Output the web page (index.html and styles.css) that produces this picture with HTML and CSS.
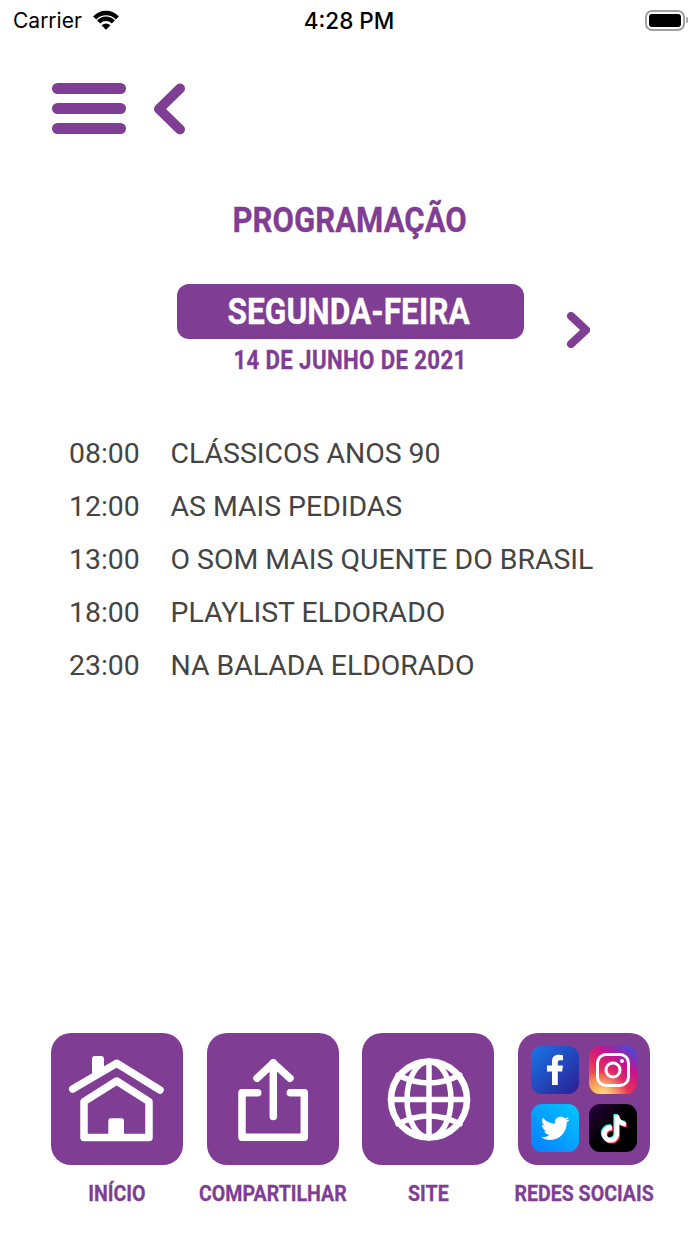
FILE: index.html
```html
<!DOCTYPE html>
<html lang="en">

<head>
    <meta charset="UTF-8">
    <title>Programação</title>
    <link rel="stylesheet" href="styles.css">
</head>

<body>
    <div class="page">
        <div class="status-bar">
            <div class="status-left">
                <span class="carrier">Carrier</span>
                <svg class="wifi" width="28" height="20" viewBox="0 0 28 20">
                    <path d="M2.700 7.900 A15.500 15.500 0 0 1 25.300 7.900"/>
                    <path d="M6.700 11.900 A10 10 0 0 1 21.300 11.900"/>
                    <path class="wifi-dot" d="M14 19.800 L9.500 15.200 Q14 11.600 18.500 15.200 Z"/>
                </svg>
            </div>
            <span class="clock">4:28 PM</span>
            <div class="battery">
                <div class="battery-body"><div class="battery-fill"></div></div>
                <div class="battery-nub"></div>
            </div>
        </div>

        <div class="toolbar">
            <div class="burger">
                <span></span>
                <span></span>
                <span></span>
            </div>
            <svg width="32" height="52" viewBox="0 0 32 52">
                <path class="chevron" d="M27 5.500 L6 26 L27 46.500"/>
            </svg>
        </div>

        <h1 class="title"><span class="narrow">PROGRAMAÇÃO</span></h1>

        <div class="day-row">
            <div class="day-pill"><span class="narrow">SEGUNDA-FEIRA</span></div>
            <svg class="next" width="24" height="36" viewBox="0 0 24 36">
                <path class="chevron" d="M5 4 L20 18 L5 32"/>
            </svg>
        </div>
        <div class="date"><span class="narrow">14 DE JUNHO DE 2021</span></div>

        <div class="schedule">
            <div class="show"><span>08:00</span><span>CLÁSSICOS ANOS 90</span></div>
            <div class="show"><span>12:00</span><span>AS MAIS PEDIDAS</span></div>
            <div class="show"><span>13:00</span><span>O SOM MAIS QUENTE DO BRASIL</span></div>
            <div class="show"><span>18:00</span><span>PLAYLIST ELDORADO</span></div>
            <div class="show"><span>23:00</span><span>NA BALADA ELDORADO</span></div>
        </div>

        <div class="footer">
            <div class="item">
                <div class="tile">
                    <svg class="line-icon" viewBox="0 0 132 132">
                        <path class="solid" d="M41 42 V26 Q41 23 44 23 H50 Q53 23 53 26 V36 Z"/>
                        <path d="M21.700 56 L65.700 30.300 L109 57"/>
                        <path d="M33 68.700 L65.700 48 L98 68.700 V104.500 H33 Z"/>
                        <path class="solid door" d="M57.300 104 V88 Q57.300 85.300 60 85.300 H70.300 Q73 85.300 73 88 V104 Z"/>
                    </svg>
                </div>
                <span class="label"><span class="narrow">INÍCIO</span></span>
            </div>
            <div class="item">
                <div class="tile">
                    <svg class="line-icon" viewBox="0 0 132 132">
                        <path d="M50 45.300 L66.300 30 L83 45.300"/>
                        <path d="M66.300 30 V83.500"/>
                        <path d="M50.700 59.700 H35 V104.300 H97.300 V59.700 H83.300"/>
                    </svg>
                </div>
                <span class="label"><span class="narrow">COMPARTILHAR</span></span>
            </div>
            <div class="item">
                <div class="tile">
                    <svg class="line-icon globe" viewBox="0 0 132 132">
                        <circle class="globe-rim" cx="67" cy="66.500" r="38"/>
                        <ellipse cx="67" cy="66.500" rx="22" ry="38"/>
                        <path d="M67 28 V105"/>
                        <path d="M28.500 66.500 H105.500"/>
                        <path d="M36 42 Q67 58 98 42"/>
                        <path d="M36 91 Q67 75 98 91"/>
                    </svg>
                </div>
                <span class="label"><span class="narrow">SITE</span></span>
            </div>
            <div class="item">
                <div class="tile social">
                    <svg class="social-icon" viewBox="0 0 48 48">
                        <defs>
                            <linearGradient id="fb" x1="0" y1="0" x2="1" y2="1">
                                <stop offset="0" stop-color="#1877e6"/>
                                <stop offset="1" stop-color="#2b1c94"/>
                            </linearGradient>
                        </defs>
                        <rect width="48" height="48" rx="11" fill="url(#fb)"/>
                        <path fill="#fff" d="M21 39 V25.500 H16 V19.500 H21 V15.500 C21 11 23.500 8.800 27.500 8.800 C29.500 8.800 31 9 32 9.200 V14.300 H29 C27 14.300 26.800 15.300 26.800 16.800 V19.500 H32 L31.200 25.500 H26.800 V39 Z"/>
                    </svg>
                    <svg class="social-icon" viewBox="0 0 48 48">
                        <defs>
                            <linearGradient id="ig" x1="0.1" y1="1" x2="0.8" y2="0">
                                <stop offset="0" stop-color="#f8902c"/>
                                <stop offset="0.4" stop-color="#e8305a"/>
                                <stop offset="0.7" stop-color="#c5148c"/>
                                <stop offset="1" stop-color="#4f45d8"/>
                            </linearGradient>
                            <radialGradient id="ig-glow" cx="0.3" cy="1" r="0.5">
                                <stop offset="0" stop-color="#ffdc80"/>
                                <stop offset="1" stop-color="#ffdc80" stop-opacity="0"/>
                            </radialGradient>
                        </defs>
                        <rect width="48" height="48" rx="11" fill="url(#ig)"/>
                        <rect width="48" height="48" rx="11" fill="url(#ig-glow)"/>
                        <rect x="8.500" y="8.500" width="31" height="31" rx="8.500" fill="none" stroke="#fff" stroke-width="3"/>
                        <circle cx="24" cy="24" r="7" fill="none" stroke="#fff" stroke-width="3"/>
                        <circle cx="33" cy="15" r="2" fill="#fff"/>
                    </svg>
                    <svg class="social-icon" viewBox="0 0 48 48">
                        <defs>
                            <linearGradient id="tw" x1="0" y1="1" x2="1" y2="0">
                                <stop offset="0" stop-color="#0a7bff"/>
                                <stop offset="1" stop-color="#00c8ff"/>
                            </linearGradient>
                        </defs>
                        <rect width="48" height="48" rx="11" fill="url(#tw)"/>
                        <path fill="#fff" transform="translate(10 10) scale(1.190)" d="M23.953 4.570a10 10 0 01-2.825.775 4.958 4.958 0 002.163-2.723c-.951.555-2.005.959-3.127 1.184a4.920 4.920 0 00-8.384 4.482C7.690 8.095 4.067 6.130 1.640 3.162a4.822 4.822 0 00-.666 2.475c0 1.710.870 3.213 2.188 4.096a4.904 4.904 0 01-2.228-.616v.060a4.923 4.923 0 003.946 4.827 4.996 4.996 0 01-2.212.085 4.936 4.936 0 004.604 3.417 9.867 9.867 0 01-6.102 2.105c-.390 0-.779-.023-1.170-.067a13.995 13.995 0 007.557 2.209c9.053 0 13.998-7.496 13.998-13.985 0-.210 0-.420-.015-.630A9.935 9.935 0 0024 4.590z"/>
                    </svg>
                    <svg class="social-icon" viewBox="0 0 48 48">
                        <defs>
                            <linearGradient id="tk" x1="0" y1="0" x2="1" y2="1">
                                <stop offset="0" stop-color="#2a0040"/>
                                <stop offset="0.5" stop-color="#000"/>
                            </linearGradient>
                            <path id="note" d="M12.525.020c1.310-.020 2.610-.010 3.910-.020.080 1.530.630 3.090 1.750 4.170 1.120 1.110 2.700 1.620 4.240 1.790v4.030c-1.440-.050-2.890-.350-4.200-.970-.570-.260-1.100-.590-1.620-.930-.010 2.920.010 5.840-.020 8.750-.080 1.400-.540 2.790-1.350 3.940-1.310 1.920-3.580 3.170-5.910 3.210-1.430.080-2.860-.310-4.080-1.030-2.020-1.190-3.440-3.370-3.650-5.710-.020-.500-.030-1-.010-1.490.180-1.900 1.120-3.720 2.580-4.960 1.660-1.440 3.980-2.130 6.150-1.720.020 1.480-.040 2.960-.040 4.440-.990-.320-2.150-.230-3.020.370-.630.410-1.110 1.040-1.360 1.750-.210.510-.150 1.070-.140 1.610.240 1.640 1.820 3.020 3.500 2.870 1.120-.010 2.190-.660 2.770-1.610.190-.330.400-.670.410-1.060.100-1.790.060-3.570.070-5.360.010-4.030-.010-8.050.020-12.070z"/>
                        </defs>
                        <rect width="48" height="48" rx="11" fill="url(#tk)"/>
                        <use href="#note" fill="#25f4ee" transform="translate(10 10) scale(1.150)"/>
                        <use href="#note" fill="#fe2c55" transform="translate(12 12) scale(1.150)"/>
                        <use href="#note" fill="#fff" transform="translate(11 11) scale(1.150)"/>
                    </svg>
                </div>
                <span class="label"><span class="narrow">REDES SOCIAIS</span></span>
            </div>
        </div>
    </div>
</body>

</html>
```

FILE: styles.css
```css
body {
    margin: 0;
    background-color: #fff;
    font-family: Roboto, Arial, sans-serif;
}

.page {
    display: flex;
    flex-direction: column;
    width: 700px;
    height: 1244px;
    overflow: hidden;
}

.narrow {
    display: inline-block;
    transform: scaleX(0.89);
    white-space: nowrap;
    -webkit-text-stroke: 0.3px currentColor;
}

.status-bar {
    display: grid;
    grid-template-columns: 1fr auto 1fr;
    align-items: center;
    height: 40px;
    padding: 0 12px 0 13px;
    color: #000;
    font-family: Inter, Roboto, sans-serif;
    font-size: 21px;
}

.status-left {
    display: flex;
    align-items: center;
    gap: 10px;
}

.wifi path {
    fill: none;
    stroke: #000;
    stroke-width: 4.4;
}

.wifi .wifi-dot {
    fill: #000;
    stroke: none;
}

.clock {
    margin-right: 3px;
    font-size: 22.5px;
    font-weight: 500;
}

.battery {
    display: flex;
    align-items: center;
    justify-self: end;
    gap: 1px;
}

.battery-body {
    width: 40px;
    height: 21px;
    padding: 2px;
    box-sizing: border-box;
    border: 2px solid #a0a0a0;
    border-radius: 7px;
}

.battery-fill {
    height: 100%;
    background: #000;
    border-radius: 3px;
}

.battery-nub {
    width: 2px;
    height: 6px;
    background: #a8a8a8;
    border-radius: 1px;
}

.toolbar {
    display: flex;
    align-items: flex-start;
    gap: 27px;
    margin: 43px 0 0 52px;
}

.burger {
    display: flex;
    flex-direction: column;
    gap: 9px;
    width: 74px;
}

.burger span {
    height: 11px;
    background: #7f3e93;
    border-radius: 6px;
}

.chevron {
    fill: none;
    stroke: #7f3e93;
    stroke-width: 10;
    stroke-linecap: round;
    stroke-linejoin: round;
}

.next .chevron {
    stroke-width: 8;
}

.title {
    margin: 65px 0 0;
    color: #7f3e93;
    font-size: 35px;
    font-weight: 700;
    line-height: 42px;
    text-align: center;
}

.day-row {
    display: flex;
    gap: 42px;
    margin: 42px 0 0 177px;
}

.day-pill {
    width: 347px;
    height: 55px;
    padding-right: 3px;
    box-sizing: border-box;
    background: #7f3e93;
    border-radius: 12px;
    color: #fff;
    font-size: 36px;
    font-weight: 700;
    line-height: 57px;
    text-align: center;
}

.day-pill .narrow {
    transform: scaleX(0.88);
}

.next {
    margin-top: 28px;
}

.date {
    margin-top: -2px;
    color: #7f3e93;
    font-size: 25px;
    font-weight: 700;
    letter-spacing: 0.4px;
    line-height: 30px;
    text-align: center;
}

.schedule {
    margin: 51px 0 0 69px;
    color: #444;
    font-size: 28.4px;
}

.show {
    display: grid;
    grid-template-columns: 101.500px 1fr;
    height: 53px;
    line-height: 53px;
}

.footer {
    display: grid;
    grid-template-columns: repeat(4, 132px);
    gap: 23.600px;
    margin: auto 0 0 51px;
    padding-bottom: 37px;
}

.item {
    display: flex;
    flex-direction: column;
    align-items: center;
    gap: 14px;
}

.tile {
    width: 132px;
    height: 132px;
    background: #7f3e93;
    border-radius: 20px;
}

.line-icon {
    display: block;
    fill: none;
    stroke: #fff;
    stroke-width: 7.5;
    stroke-linecap: round;
    stroke-linejoin: round;
}

.line-icon .solid {
    fill: #fff;
    stroke: none;
}

.globe {
    stroke-width: 5.5;
}

.globe .globe-rim {
    stroke-width: 6.5;
}

.social {
    display: grid;
    grid-template-columns: 48px 48px;
    gap: 10px;
    justify-content: center;
    align-content: center;
}

.social-icon {
    display: block;
    width: 48px;
    height: 48px;
}

.label {
    color: #7f3e93;
    font-size: 22.5px;
    font-weight: 700;
    line-height: 28px;
    white-space: nowrap;
}

.label .narrow {
    transform: scaleX(0.87);
}
```
